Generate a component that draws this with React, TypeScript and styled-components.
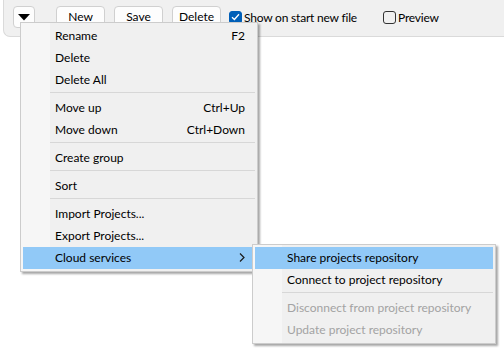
import React from 'react';
import styled, { createGlobalStyle } from 'styled-components';

const GlobalStyle = createGlobalStyle`
  html, body {
    margin: 0;
    padding: 0;
    background: #ffffff;
  }
  body {
    font-family: Lato, "Noto Sans", sans-serif;
    font-size: 12px;
    color: #000000;
  }
`;

const Screen = styled.div`
  position: relative;
  width: 504px;
  height: 348px;
  overflow: hidden;
  background: #ffffff;
`;

const Toolbar = styled.div`
  margin-left: 3px;
  height: 37px;
  box-sizing: border-box;
  background: #f0f0f0;
  border-left: 1px solid #dadada;
  border-bottom: 1px solid #dadada;
  border-bottom-left-radius: 7px;
  display: flex;
  align-items: flex-start;
  padding: 6px 0 0 9px;
`;

const DropButton = styled.div`
  width: 22px;
  height: 22px;
  box-sizing: border-box;
  border: 1px solid #d0d0d0;
  border-radius: 4px;
  background: #fdfdfd;
  display: flex;
  align-items: center;
  justify-content: center;
`;

const ButtonGroup = styled.div`
  display: flex;
  gap: 9px;
  margin-left: 21px;
`;

const Button = styled.div`
  width: 49px;
  height: 22px;
  box-sizing: border-box;
  border: 1px solid #d0d0d0;
  border-radius: 4px;
  background: #fdfdfd;
  display: flex;
  align-items: center;
  justify-content: center;
  line-height: 1;
`;

const CheckLabel = styled.label<{ $width: number }>`
  width: ${p => p.$width}px;
  height: 22px;
  display: flex;
  align-items: center;
  gap: 2px;
  margin-left: 8px;
  letter-spacing: -0.2px;
`;

const Box = styled.span<{ $checked?: boolean }>`
  width: 13px;
  height: 13px;
  box-sizing: border-box;
  border-radius: 3px;
  border: 1px solid ${p => (p.$checked ? '#005fb8' : '#333333')};
  background: ${p => (p.$checked ? '#005fb8' : 'transparent')};
  display: flex;
  align-items: center;
  justify-content: center;
`;

const Menu = styled.div<{ $left: number; $top: number; $width: number }>`
  position: absolute;
  left: ${p => p.$left}px;
  top: ${p => p.$top}px;
  width: ${p => p.$width}px;
  box-sizing: border-box;
  padding: 2px;
  border: 1px solid #cccccc;
  background: linear-gradient(to right, #f6f6f6 29px, #f0f0f0 29px);
  box-shadow: 2px 2px 2px rgba(0, 0, 0, 0.35);
`;

const Item = styled.div<{ $active?: boolean; $disabled?: boolean }>`
  height: 22px;
  box-sizing: border-box;
  padding: 0 10px 1px 32px;
  display: flex;
  align-items: center;
  justify-content: space-between;
  background: ${p => (p.$active ? '#91c9f7' : 'transparent')};
  color: ${p => (p.$disabled ? '#a3a3a3' : '#000000')};
  white-space: nowrap;
`;

const Separator = styled.div`
  height: 6px;
  margin-left: 27px;
  box-sizing: border-box;
  padding-top: 1px;
  &::before {
    content: '';
    display: block;
    height: 1px;
    background: #d7d7d7;
  }
`;

const Chevron = () => (
  <svg width="6" height="9" viewBox="0 0 6 9">
    <path d="M1 0.5 L5 4.5 L1 8.5" fill="none" stroke="#1a1a1a" strokeWidth="1.2" />
  </svg>
);

const Check = () => (
  <svg width="9" height="8" viewBox="0 0 9 8">
    <path d="M1 4.2 L3.4 6.5 L8 1.3" fill="none" stroke="#ffffff" strokeWidth="1.3" />
  </svg>
);

type Entry = { label?: string; shortcut?: string; sub?: boolean; active?: boolean; disabled?: boolean };

const mainItems: Entry[] = [
  { label: 'Rename', shortcut: 'F2' },
  { label: 'Delete' },
  { label: 'Delete All' },
  {},
  { label: 'Move up', shortcut: 'Ctrl+Up' },
  { label: 'Move down', shortcut: 'Ctrl+Down' },
  {},
  { label: 'Create group' },
  {},
  { label: 'Sort' },
  {},
  { label: 'Import Projects...' },
  { label: 'Export Projects...' },
  { label: 'Cloud services', sub: true, active: true },
];

const cloudItems: Entry[] = [
  { label: 'Share projects repository', active: true },
  { label: 'Connect to project repository' },
  {},
  { label: 'Disconnect from project repository', disabled: true },
  { label: 'Update project repository', disabled: true },
];

const renderItems = (items: Entry[]) =>
  items.map((it, i) =>
    it.label ? (
      <Item key={i} $active={it.active} $disabled={it.disabled}>
        <span>{it.label}</span>
        {it.shortcut && <span>{it.shortcut}</span>}
        {it.sub && <Chevron />}
      </Item>
    ) : (
      <Separator key={i} />
    )
  );

const App = () => {
  return (
    <Screen>
      <GlobalStyle />
      <Toolbar>
        <DropButton>
          <svg width="12" height="7" viewBox="0 0 12 7">
            <polygon points="0,0 12,0 6,6.5" fill="#000000" />
          </svg>
        </DropButton>
        <ButtonGroup>
          <Button>New</Button>
          <Button>Save</Button>
          <Button>Delete</Button>
        </ButtonGroup>
        <CheckLabel $width={146}>
          <Box $checked>
            <Check />
          </Box>
          Show on start new file
        </CheckLabel>
        <CheckLabel $width={80}>
          <Box />
          Preview
        </CheckLabel>
      </Toolbar>

      <Menu $left={20} $top={22} $width={238}>
        {renderItems(mainItems)}
      </Menu>
      <Menu $left={252} $top={244} $width={244}>
        {renderItems(cloudItems)}
      </Menu>
    </Screen>
  );
};

export default App;
